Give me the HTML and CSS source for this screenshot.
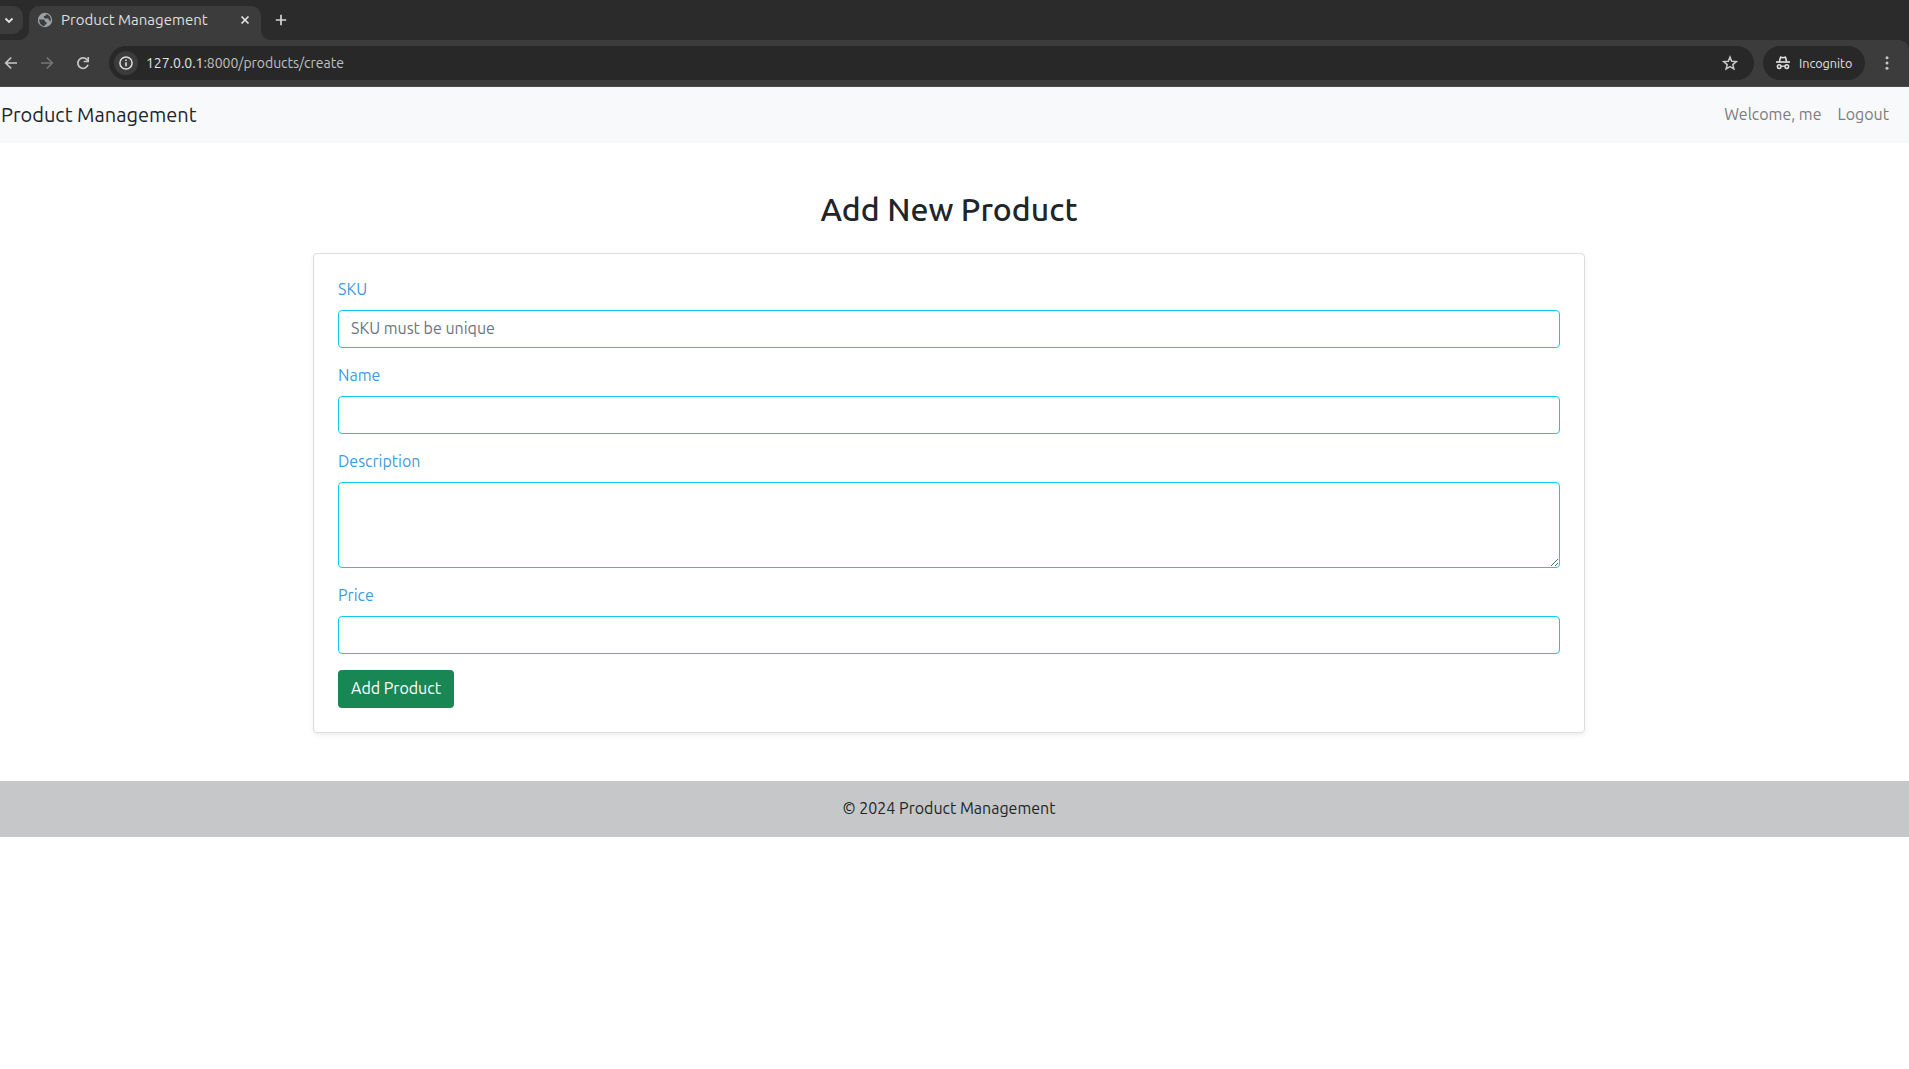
FILE: index.html
```
<!DOCTYPE html>
<html lang="en">
<head>
<meta charset="utf-8">
<title>Product Management</title>
<link rel="stylesheet" href="styles.css">
</head>
<body>
<header class="browser">
  <div class="tabstrip">
    <div class="tab-search"><svg width="10" height="7" viewBox="0 0 10 7"><path d="M1.500 1.500 5 5l3.500-3.500" fill="none" stroke="#e3e3e3" stroke-width="1.800"/></svg></div>
    <div class="tab">
      <svg class="globe" width="16" height="16" viewBox="0 0 16 16"><circle cx="8" cy="8" r="7.200" fill="#9aa0a6"/><path d="M2.200 7.400h3.600c1.500 0 2.100.7 2.100 1.700 0 .8.700 1 1.600 1v1.500c0 .8-.7 1-1.600 1V14C4.500 14 2.200 11 2.200 7.400zM9.200 2.200c0 1.300-.6 1.700-1.700 1.700-.9 0-1 .9-.4 1.500.5.5.3 1.200 1.200 1.200h2.400c.8 0 1.200.6 1.200 1.300s.7.8 1.900.8c.5-3.200-1.600-5.800-4.600-6.500z" fill="#3c3c3c"/></svg>
      <span class="tab-title">Product Management</span>
      <svg class="close" width="10" height="10" viewBox="0 0 10 10"><path d="m1.500 1.500 7 7m0-7-7 7" stroke="#e3e3e3" stroke-width="1.700"/></svg>
    </div>
    <svg class="plus" width="12" height="12" viewBox="0 0 12 12"><path d="M6 .8v10.400M.8 6h10.400" stroke="#d5d5d5" stroke-width="1.700"/></svg>
  </div>
  <div class="toolbar">
    <svg class="back" width="14" height="14" viewBox="0 0 14 14"><path d="M13 7H2M7.200 1.500 1.700 7l5.500 5.500" fill="none" stroke="#c7c7c7" stroke-width="1.700"/></svg>
    <svg class="forward" width="14" height="14" viewBox="0 0 14 14"><path d="M1 7h11M6.800 1.500 12.300 7l-5.500 5.500" fill="none" stroke="#757575" stroke-width="1.700"/></svg>
    <svg class="reload" width="14" height="14" viewBox="0 0 14 14"><path d="M12 8.800A5.200 5.200 0 1 1 10.800 3.500l1 1.200" fill="none" stroke="#c7c7c7" stroke-width="1.700"/><path d="M12.200 1v4.500H7.700" fill="none" stroke="#c7c7c7" stroke-width="1.700"/></svg>
    <div class="omnibox">
      <span class="site-info"><svg width="14" height="14" viewBox="0 0 14 14"><circle cx="7" cy="7" r="6.100" fill="none" stroke="#dedede" stroke-width="1.500"/><path d="M7 6.200v4.100M7 3.500v1.600" stroke="#dedede" stroke-width="1.600"/></svg></span>
      <span class="url"><b>127.0.0.1</b>:8000/products/create</span>
      <svg class="star" width="16" height="16" viewBox="0 0 16 16"><path d="m8 2 1.700 4.200 4.600.4-3.500 3 1.100 4.400L8 11.600 4.100 14l1.100-4.400-3.500-3 4.600-.4z" fill="none" stroke="#c7c7c7" stroke-width="1.500"/></svg>
    </div>
    <div class="incognito">
      <svg width="16" height="14" viewBox="0 0 16 14"><path d="M1 6h14" stroke="#e3e3e3" stroke-width="1.600"/><path d="M4.300 5.800 5.600 1.200l2.400.5 2.400-.5 1.300 4.600" fill="none" stroke="#e3e3e3" stroke-width="1.600"/><circle cx="4.200" cy="10.600" r="1.800" fill="none" stroke="#e3e3e3" stroke-width="1.500"/><circle cx="11.800" cy="10.600" r="1.800" fill="none" stroke="#e3e3e3" stroke-width="1.500"/><path d="M6 10.200h4" stroke="#e3e3e3" stroke-width="1.300"/></svg>
      <span>Incognito</span>
    </div>
    <svg class="menu" width="4" height="16" viewBox="0 0 4 16"><g fill="#c7c7c7"><circle cx="2" cy="2.700" r="1.500"/><circle cx="2" cy="8" r="1.500"/><circle cx="2" cy="13.300" r="1.500"/></g></svg>
  </div>
</header>
<nav class="navbar">
  <a class="brand">Product Management</a>
  <div class="links"><span>Welcome, me</span><a>Logout</a></div>
</nav>
<main class="content">
  <h1>Add New Product</h1>
  <form class="card">
    <label for="sku">SKU</label>
    <input id="sku" type="text" placeholder="SKU must be unique">
    <label for="name">Name</label>
    <input id="name" type="text">
    <label for="description">Description</label>
    <textarea id="description" rows="3"></textarea>
    <label for="price">Price</label>
    <input id="price" type="text">
    <button type="button">Add Product</button>
  </form>
</main>
<footer class="footer">© 2024 Product Management</footer>
</body>
</html>
```
FILE: styles.css
```
* { box-sizing: border-box; }
body {
  margin: 0;
  background: #fff;
  color: #212529;
  font: 16px/24px Ubuntu, "Open Sans", sans-serif;
}
svg { display: block; flex: none; }

/* Browser frame */
.browser { height: 87px; background: #2b2b2b; }
.tabstrip { display: flex; height: 40px; padding-top: 6px; }
.tab-search {
  display: flex; align-items: center;
  width: 23px; height: 28px; padding-left: 4px;
  border-radius: 0 10px 10px 0;
  background: #3c3c3c;
}
.tab {
  position: relative;
  display: flex; align-items: center;
  width: 232px; height: 34px; margin-left: 6px; padding: 0 11px 6px 8px;
  border-radius: 10px 10px 0 0;
  background: #3c3c3c;
}
.tab::before, .tab::after {
  content: ""; position: absolute; bottom: 0; width: 10px; height: 10px;
}
.tab::before { left: -10px; background: radial-gradient(circle at 0 0, #2b2b2b 9.500px, #3c3c3c 10.500px); }
.tab::after { right: -10px; background: radial-gradient(circle at 100% 0, #2b2b2b 9.500px, #3c3c3c 10.500px); }
.tab-title { margin-left: 8px; font-size: 15px; color: #dfdfdf; white-space: nowrap; }
.close { margin-left: auto; }
.plus { margin: 8px 0 0 14px; }
.toolbar {
  display: flex; align-items: center;
  height: 47px; padding: 0 20px 0 4px;
  border-bottom: 1px solid #4a4a4a;
  border-top-right-radius: 10px;
  background: #3c3c3c;
}
.forward { margin-left: 22px; }
.reload { margin-left: 22px; }
.omnibox {
  display: flex; flex: 1; align-items: center;
  height: 34px; margin-left: 19px; padding: 0 16px 0 5px;
  border-radius: 17px;
  background: #282828;
}
.site-info {
  display: flex; align-items: center; justify-content: center;
  width: 24px; height: 24px; border-radius: 50%;
  background: #3c3c3c;
}
.url { margin-left: 8px; font-size: 14px; letter-spacing: -.03px; color: #c0c0c0; }
.url b { font-weight: 400; color: #e3e3e3; }
.star { margin-left: auto; }
.incognito {
  display: flex; align-items: center; gap: 8px;
  width: 102px; height: 34px; margin: 0 20px 0 9px; padding-left: 12px;
  border-radius: 17px;
  background: #282828;
  color: #e3e3e3; font-size: 12.600px;
}

/* Page */
.navbar {
  display: flex; align-items: center; justify-content: space-between;
  height: 56px; padding: 0 20px 0 1px;
  background: #f8f9fa;
}
.brand { font-size: 20px; }
.links { display: flex; gap: 16px; padding-bottom: 2px; color: #7b7c7c; }
.content { padding: 48px 11px 48px 0; }
h1 {
  margin: 0 0 26px;
  font-size: 32px; line-height: 36px; font-weight: 500;
  text-align: center;
}
.card {
  display: flex; flex-direction: column;
  width: 1272px; height: 480px; margin: 0 auto; padding: 24px;
  border: 1px solid #dcdddd; border-radius: 4px;
  box-shadow: 0 2px 4px rgba(0, 0, 0, .075);
}
label { height: 24px; margin-bottom: 8px; line-height: 22px; color: #3d9be0; }
input, textarea {
  display: block; width: 100%; height: 38px; margin: 0 0 16px; padding: 5px 12px 7px;
  border: 1px solid #0dcaf0; border-radius: 4px; outline: 0;
  background: #fff; color: #212529; font: inherit;
}
textarea { height: 86px; resize: vertical; }
::placeholder { color: #6c757d; opacity: 1; }
button {
  width: 116px; height: 38px; padding: 0 0 2px;
  border: 0; border-radius: 4px;
  background: #198754; color: #fff; font: inherit;
}
.footer {
  height: 56px; padding: 15px 11px 17px 0;
  background: #c6c7c9; text-align: center;
}
```
